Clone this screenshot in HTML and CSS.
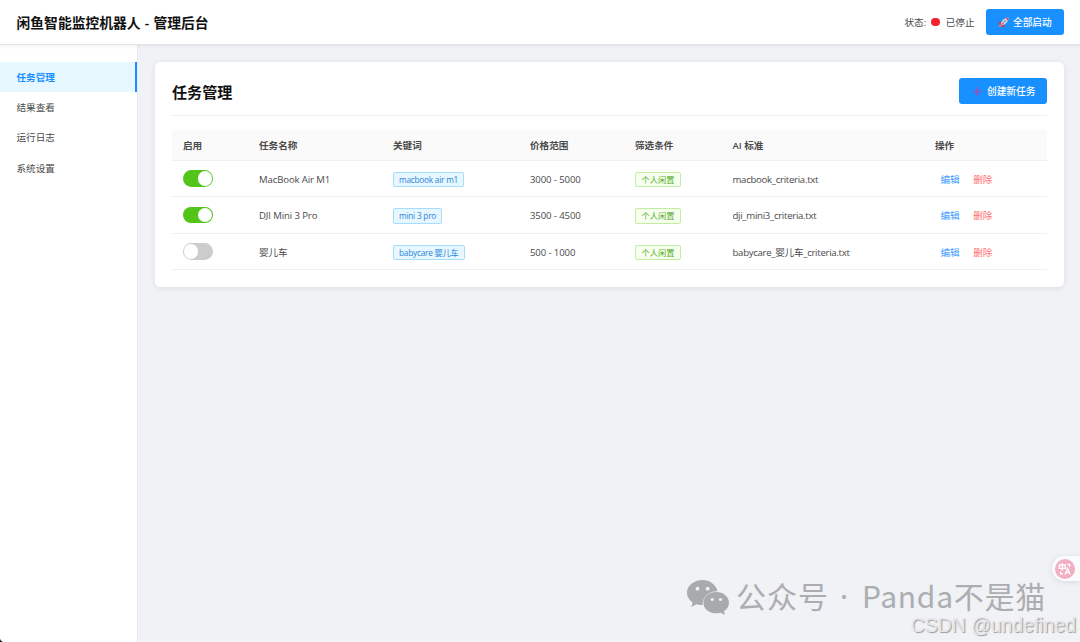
FILE: index.html
```html
<!DOCTYPE html>
<html lang="zh-CN">

<head>
    <meta charset="UTF-8">
    <meta name="viewport" content="width=device-width, initial-scale=1.0">
    <title>闲鱼智能监控机器人 - 管理后台</title>
    <link rel="stylesheet" href="styles.css">
</head>

<body>
    <header class="header">
        <h1>闲鱼智能监控机器人 - 管理后台</h1>
        <div class="header-controls">
            <span class="status">状态: <span class="status-dot"></span> 已停止</span>
            <button class="btn start-btn">
                <svg class="rocket" viewBox="0 0 24 24">
                    <path d="M8 9 3 11 1 16 7 15zM15 16 13 21 8 23 9 17z" fill="#dd2e58" />
                    <path d="M23 1C15 1 9 6 6 14l4 4C18 15 23 9 23 1z" fill="#c9d5e3" />
                    <path d="M23 1c-3 0-5 .5-7 1.400l5.600 5.600C22.500 6 23 4 23 1z" fill="#dd4b67" />
                    <circle cx="15" cy="9" r="2" fill="#6f94b8" />
                    <path d="M6 15c-3 1-4 4-4 7 3 0 6-1 7-4z" fill="#e8775a" />
                    <path d="M13 10 6 18l6-4z" fill="#c92f5e" />
                </svg>
                全部启动
            </button>
        </div>
    </header>

    <div class="container">
        <aside class="sidebar">
            <nav>
                <a class="nav-link active">任务管理</a>
                <a class="nav-link">结果查看</a>
                <a class="nav-link">运行日志</a>
                <a class="nav-link">系统设置</a>
            </nav>
        </aside>

        <main class="main">
            <section class="card">
                <div class="card-header">
                    <h2>任务管理</h2>
                    <button class="btn create-btn">
                        <svg class="plus" viewBox="0 0 9 9">
                            <path d="M4.500 0v9M0 4.500h9" stroke="#9a52b5" stroke-width="1.500" />
                        </svg>
                        创建新任务
                    </button>
                </div>

                <table class="tasks-table">
                    <colgroup>
                        <col class="col-enabled">
                        <col class="col-name">
                        <col class="col-keyword">
                        <col class="col-price">
                        <col class="col-filter">
                        <col class="col-ai">
                        <col>
                    </colgroup>
                    <thead>
                        <tr>
                            <th>启用</th>
                            <th>任务名称</th>
                            <th>关键词</th>
                            <th>价格范围</th>
                            <th>筛选条件</th>
                            <th>AI 标准</th>
                            <th>操作</th>
                        </tr>
                    </thead>
                    <tbody>
                        <tr>
                            <td class="enabled"><span class="switch on"></span></td>
                            <td class="name">MacBook Air M1</td>
                            <td><span class="tag">macbook air m1</span></td>
                            <td class="price">3000 - 5000</td>
                            <td><span class="tag personal">个人闲置</span></td>
                            <td class="criteria">macbook_criteria.txt</td>
                            <td><a class="action edit">编辑</a><a class="action delete">删除</a></td>
                        </tr>
                        <tr class="tall">
                            <td class="enabled"><span class="switch on"></span></td>
                            <td class="name">DJI Mini 3 Pro</td>
                            <td><span class="tag">mini 3 pro</span></td>
                            <td class="price">3500 - 4500</td>
                            <td><span class="tag personal">个人闲置</span></td>
                            <td class="criteria">dji_mini3_criteria.txt</td>
                            <td><a class="action edit">编辑</a><a class="action delete">删除</a></td>
                        </tr>
                        <tr class="tall">
                            <td class="enabled"><span class="switch"></span></td>
                            <td class="name">婴儿车</td>
                            <td><span class="tag">babycare 婴儿车</span></td>
                            <td class="price">500 - 1000</td>
                            <td><span class="tag personal">个人闲置</span></td>
                            <td class="criteria">babycare_婴儿车_criteria.txt</td>
                            <td><a class="action edit">编辑</a><a class="action delete">删除</a></td>
                        </tr>
                    </tbody>
                </table>
            </section>
        </main>
    </div>

    <!-- floating overlays -->
    <div class="translate-btn">
        <svg viewBox="0 0 20 20">
            <circle cx="10" cy="10" r="10" fill="#f2afc3" />
            <g fill="none" stroke="#fff" stroke-width="1.300">
                <path d="M4.300 6h6v3.300h-6zM7.300 4v7.500M12.300 5.500h2.400v2.300M5.500 12.500v2.300h2.600M10 15.500l2.600-6 2.600 6M11 13.500h3.300" />
            </g>
        </svg>
    </div>
    <div class="wechat-mark">
        <svg viewBox="0 0 42 35">
            <path d="M15.500 0C6.900 0 0 5.600 0 12.700c0 4 2.200 7.400 5.600 9.800L4.400 27l5.200-2.800c2 .6 4 .9 6.100.9C15 17.500 21.500 11 30.500 11.200 29 4.700 22.800 0 15.500 0z" fill="#a9aaae" />
            <path d="M29.200 12c-7.200 0-12.800 4.800-12.800 10.700s5.600 10.600 12.800 10.600c1.600 0 3-.2 4.400-.6l4.400 2.300-1.100-3.700c3.100-2 5.100-5 5.100-8.600C42 16.800 36.400 12 29.200 12z" fill="#a9aaae" />
            <g fill="#f0f2f5">
                <circle cx="10.500" cy="8.700" r="1.900" />
                <circle cx="20.700" cy="8.700" r="1.900" />
                <circle cx="25.200" cy="19.500" r="1.600" />
                <circle cx="33.500" cy="19.500" r="1.600" />
            </g>
        </svg>
        <span class="wechat-label">公众号</span>
        <span class="wechat-sep">·</span>
        <span class="wechat-name">Panda不是猫</span>
    </div>
    <div class="csdn-mark">CSDN @undefined</div>
    <div class="window-corner"></div>
</body>

</html>
```
FILE: styles.css
```css
* {
    box-sizing: border-box;
}

body {
    position: relative;
    margin: 0;
    height: 642px;
    overflow: hidden;
    display: flex;
    flex-direction: column;
    font-family: "Open Sans", "Noto Sans CJK SC", sans-serif;
    font-size: 9.6px;
    line-height: 15px;
    color: #4a4a4a;
    background: #f0f2f5;
}

h1,
h2 {
    margin: 0;
    color: #111;
    font-weight: 600;
}

/* Header */
.header {
    position: relative;
    z-index: 1;
    display: flex;
    align-items: center;
    justify-content: space-between;
    flex: none;
    height: 45px;
    padding: 0 16.500px;
    background: #fff;
    border-bottom: 1px solid #e2e3e5;
    box-shadow: 0 1px 5px rgba(0, 0, 0, 0.06);
}

.header h1 {
    padding-top: 1px;
    font-size: 13.800px;
    line-height: 20px;
    word-spacing: 0.600px;
}

.header-controls {
    display: flex;
    align-items: center;
    gap: 11px;
}

.status {
    display: flex;
    align-items: center;
}

.status-dot {
    width: 8.500px;
    height: 8.500px;
    margin: 0 6px 0 5px;
    border-radius: 50%;
    background: #f5222d;
}

.btn {
    display: flex;
    align-items: center;
    height: 26px;
    padding: 0 11px;
    border: none;
    border-radius: 3px;
    background: #1890ff;
    color: #fff;
    font: 500 9.700px/15px "Open Sans", "Noto Sans CJK SC", sans-serif;
}

.start-btn {
    width: 78px;
    padding-left: 12.500px;
}

.create-btn {
    width: 88px;
    padding-left: 14px;
}

.rocket {
    width: 11px;
    height: 11px;
    margin-right: 4px;
}

.plus {
    width: 9px;
    height: 9px;
    margin-right: 5px;
}

/* Layout */
.container {
    display: flex;
    flex: 1;
}

.sidebar {
    flex: none;
    width: 138px;
    padding-top: 16.500px;
    background: #fff;
    border-right: 1px solid #e8e9ec;
}

.nav-link {
    display: block;
    height: 30.400px;
    padding: 1px 16.500px 0;
    line-height: 30.400px;
    color: #4a4a4a;
}

.nav-link.active {
    color: #1890ff;
    font-weight: 600;
    background: #e6f7ff;
    border-right: 2px solid #1890ff;
}

.main {
    flex: 1;
    padding: 17px 16.500px 17px 17px;
}

.card {
    height: 225px;
    padding: 0 16.500px 0 17px;
    background: #fff;
    border-radius: 5.500px;
    box-shadow: 0 1px 6px rgba(0, 0, 0, 0.09);
}

.card-header {
    display: flex;
    align-items: center;
    justify-content: space-between;
    height: 54px;
    padding-top: 5px;
    margin-bottom: 14px;
    border-bottom: 1px solid #f0f0f0;
}

.card-header h2 {
    padding-top: 1px;
    font-size: 15.100px;
    line-height: 22px;
}

/* Table */
.tasks-table {
    width: 100%;
    table-layout: fixed;
    border-collapse: separate;
    border-spacing: 0;
}

.col-enabled { width: 76px; }
.col-name { width: 134px; }
.col-keyword { width: 137px; }
.col-price { width: 105px; }
.col-filter { width: 97.500px; }
.col-ai { width: 202.500px; }

.tasks-table th,
.tasks-table td {
    height: 36px;
    padding: 1.500px 11px 0;
    text-align: left;
    vertical-align: middle;
    white-space: nowrap;
    border-bottom: 1px solid #f0f0f0;
}

.tasks-table th {
    height: 31px;
    padding-top: 1px;
    font-weight: 600;
    background: #fafafa;
}

.tasks-table .tall td {
    height: 36.500px;
    padding-top: 2px;
}

.tasks-table .enabled,
.tasks-table .tall .enabled {
    padding: 0 10.500px;
}

.name {
    letter-spacing: -0.120px;
}

.price {
    letter-spacing: -0.120px;
}

.criteria {
    letter-spacing: -0.280px;
}

.switch {
    display: block;
    width: 30.500px;
    height: 16.500px;
    padding: 1px;
    border-radius: 9px;
    background: #ccc;
}

.switch::before {
    content: "";
    display: block;
    width: 14.500px;
    height: 14.500px;
    border-radius: 50%;
    background: #fff;
}

.switch.on {
    background: #52c41a;
}

.switch.on::before {
    margin-left: auto;
}

.tag {
    display: block;
    width: fit-content;
    height: 15.500px;
    padding: 0 5px;
    border: 1px solid #a8dcff;
    border-radius: 2px;
    background: #e6f7ff;
    color: #2b85d9;
    font-size: 8.250px;
    line-height: 14.500px;
    letter-spacing: -0.220px;
}

.tag.personal {
    padding: 0 5.500px;
    border-color: #c3eda2;
    background: #f6ffed;
    color: #57ad2b;
    letter-spacing: 0;
}

.action {
    margin-left: 5.500px;
}

.action.edit {
    color: #3b9bff;
}

.action.delete {
    margin-left: 13.500px;
    color: #ff7072;
}

/* Overlays */
.translate-btn {
    position: absolute;
    right: 0;
    top: 556px;
    width: 28px;
    height: 25px;
    padding: 3px;
    border-radius: 13px 0 0 13px;
    background: #fafbfc;
    box-shadow: 0 1px 6px rgba(0, 0, 0, 0.1);
}

.translate-btn svg {
    display: block;
    width: 20px;
    height: 20px;
}

.wechat-mark {
    position: absolute;
    left: 686.500px;
    top: 575px;
    display: flex;
    align-items: center;
    height: 40px;
    color: #acadb1;
    font-family: "Noto Sans CJK SC", sans-serif;
    font-size: 30px;
    line-height: 36px;
    white-space: nowrap;
}

.wechat-mark svg {
    width: 42px;
    height: 35px;
    margin: 4px 7.500px 0 0;
}

.wechat-label {
    letter-spacing: 1px;
}

.wechat-sep {
    width: 32px;
    padding: 4px 2px 0 0;
    font-family: "Noto Sans", sans-serif;
    text-align: center;
}

.wechat-name {
    padding-left: 1px;
    letter-spacing: 0.700px;
}

.csdn-mark {
    position: absolute;
    right: 4px;
    top: 614px;
    color: #e4e6e9;
    font: 19.400px/22px "Liberation Sans", Arial, sans-serif;
    text-shadow: 1px 1px 1px #999;
}

.window-corner {
    position: absolute;
    left: 0;
    bottom: 0;
    width: 4px;
    height: 4px;
    background: radial-gradient(circle at 100% 0, transparent 3.500px, #111 4.500px);
}
```
